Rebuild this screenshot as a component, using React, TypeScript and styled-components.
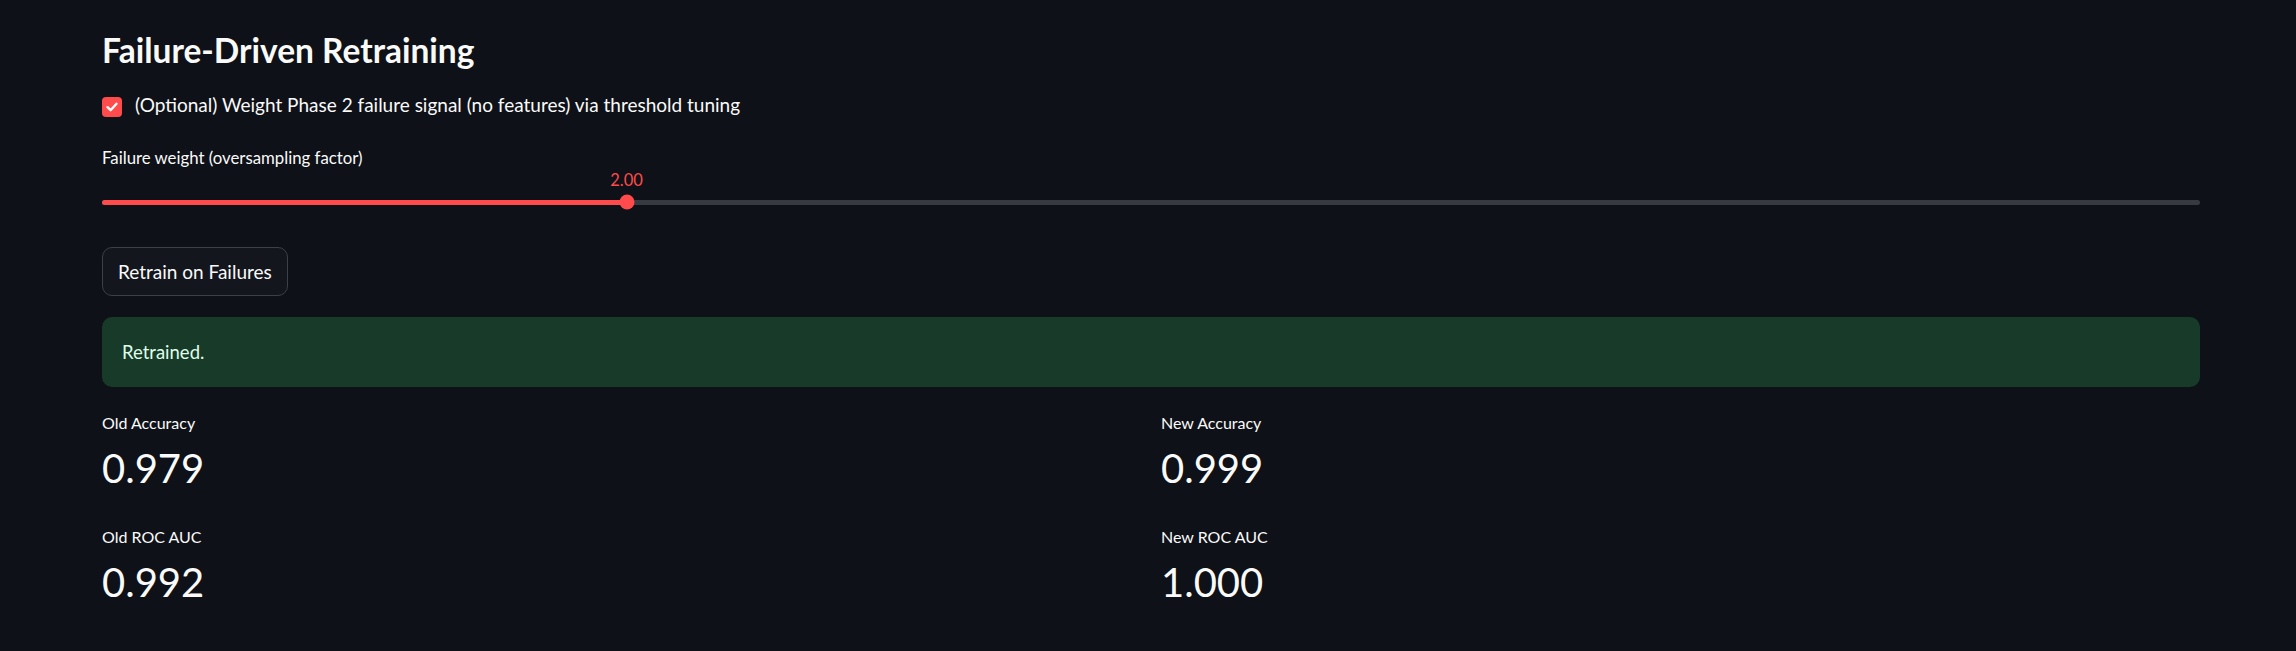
import * as React from 'react';
import styled, { createGlobalStyle } from 'styled-components';

const GlobalStyle = createGlobalStyle`
    html, body {
        margin: 0;
        padding: 0;
        background: #0e1117;
    }

    body {
        font-family: Lato, "Noto Sans", sans-serif;
        color: #fafafa;
    }
`;

const Main = styled.main`
    box-sizing: border-box;
    width: 100%;
    min-height: 651px;
    padding: 30px 96px 40px 102px;
    display: flex;
    flex-direction: column;
`;

const Title = styled.h3`
    margin: 0;
    font-size: 33.5px;
    line-height: 40px;
    font-weight: 700;
`;

const CheckRow = styled.label`
    margin-top: 27px;
    display: flex;
    flex-direction: row;
    align-items: flex-start;
    gap: 13px;
    font-size: 19px;
    line-height: 16px;
`;

const CheckBox = styled.span`
    width: 20px;
    height: 20px;
    border-radius: 4px;
    background: #ff4b4b;
    display: flex;
    align-items: center;
    justify-content: center;
    flex-shrink: 0;
`;

const CheckText = styled.span`
    white-space: nowrap;
`;

const SliderLabel = styled.div`
    margin-top: 31px;
    font-size: 16.8px;
    line-height: 20px;
`;

const SliderRoot = styled.div`
    position: relative;
    height: 44px;
`;

const Track = styled.div`
    position: relative;
    margin-top: 31.5px;
    height: 5px;
    border-radius: 3px;
    background: #383a42;
`;

const Fill = styled.div`
    height: 100%;
    border-radius: 3px;
    background: #ff4b4b;
`;

const Thumb = styled.div`
    position: absolute;
    top: 50%;
    width: 15px;
    height: 15px;
    border-radius: 50%;
    background: #ff4b4b;
    transform: translate(-50%, -50%);
`;

const ThumbValue = styled.div`
    position: absolute;
    top: 4px;
    transform: translateX(-50%);
    font-size: 16.5px;
    line-height: 16px;
    color: #ff4b4b;
    white-space: nowrap;
`;

const Button = styled.button`
    align-self: flex-start;
    margin-top: 35px;
    height: 49px;
    padding: 0 15px;
    border: 1px solid #3d4047;
    border-radius: 10px;
    background: #13161d;
    color: #fafafa;
    font-family: inherit;
    font-size: 19px;
    cursor: pointer;
`;

const Alert = styled.div`
    margin-top: 21px;
    height: 70px;
    box-sizing: border-box;
    padding: 0 20px;
    display: flex;
    align-items: center;
    border-radius: 10px;
    background: #183a28;
    color: #dffde9;
    font-size: 18.5px;
    line-height: 20px;
`;

const MetricGrid = styled.div`
    margin-top: 26px;
    display: grid;
    grid-template-columns: 1fr 1fr;
    column-gap: 20px;
`;

const MetricColumn = styled.div`
    display: flex;
    flex-direction: column;
    gap: 35.5px;
`;

const MetricLabel = styled.div`
    font-size: 16px;
    line-height: 20px;
`;

const MetricValue = styled.div`
    margin-top: 10.5px;
    font-size: 40px;
    line-height: 48px;
`;

type MetricProps = { label: string; value: string };

const Metric = ({ label, value }: MetricProps): JSX.Element => (
    <div>
        <MetricLabel>{label}</MetricLabel>
        <MetricValue>{value}</MetricValue>
    </div>
);

const min = 1;
const max = 5;
const value = 2;

const App = (): JSX.Element => {
    const pct = ((value - min) / (max - min)) * 100;

    return (
        <>
            <GlobalStyle />
            <Main>
                <Title>Failure-Driven Retraining</Title>
                <CheckRow>
                    <CheckBox>
                        <svg width="14" height="14" viewBox="0 0 14 14">
                            <polyline
                                points="2.5,7.2 5.6,10.2 11.5,3.8"
                                fill="none"
                                stroke="#ffffff"
                                strokeWidth="2.4"
                                strokeLinecap="round"
                                strokeLinejoin="round"
                            />
                        </svg>
                    </CheckBox>
                    <CheckText>(Optional) Weight Phase 2 failure signal (no features) via threshold tuning</CheckText>
                </CheckRow>
                <SliderLabel>Failure weight (oversampling factor)</SliderLabel>
                <SliderRoot>
                    <ThumbValue style={{ left: `${pct}%` }}>{value.toFixed(2)}</ThumbValue>
                    <Track>
                        <Fill style={{ width: `${pct}%` }} />
                        <Thumb style={{ left: `${pct}%` }} />
                    </Track>
                </SliderRoot>
                <Button>Retrain on Failures</Button>
                <Alert>Retrained.</Alert>
                <MetricGrid>
                    <MetricColumn>
                        <Metric label="Old Accuracy" value="0.979" />
                        <Metric label="Old ROC AUC" value="0.992" />
                    </MetricColumn>
                    <MetricColumn>
                        <Metric label="New Accuracy" value="0.999" />
                        <Metric label="New ROC AUC" value="1.000" />
                    </MetricColumn>
                </MetricGrid>
            </Main>
        </>
    );
};

export default App;
